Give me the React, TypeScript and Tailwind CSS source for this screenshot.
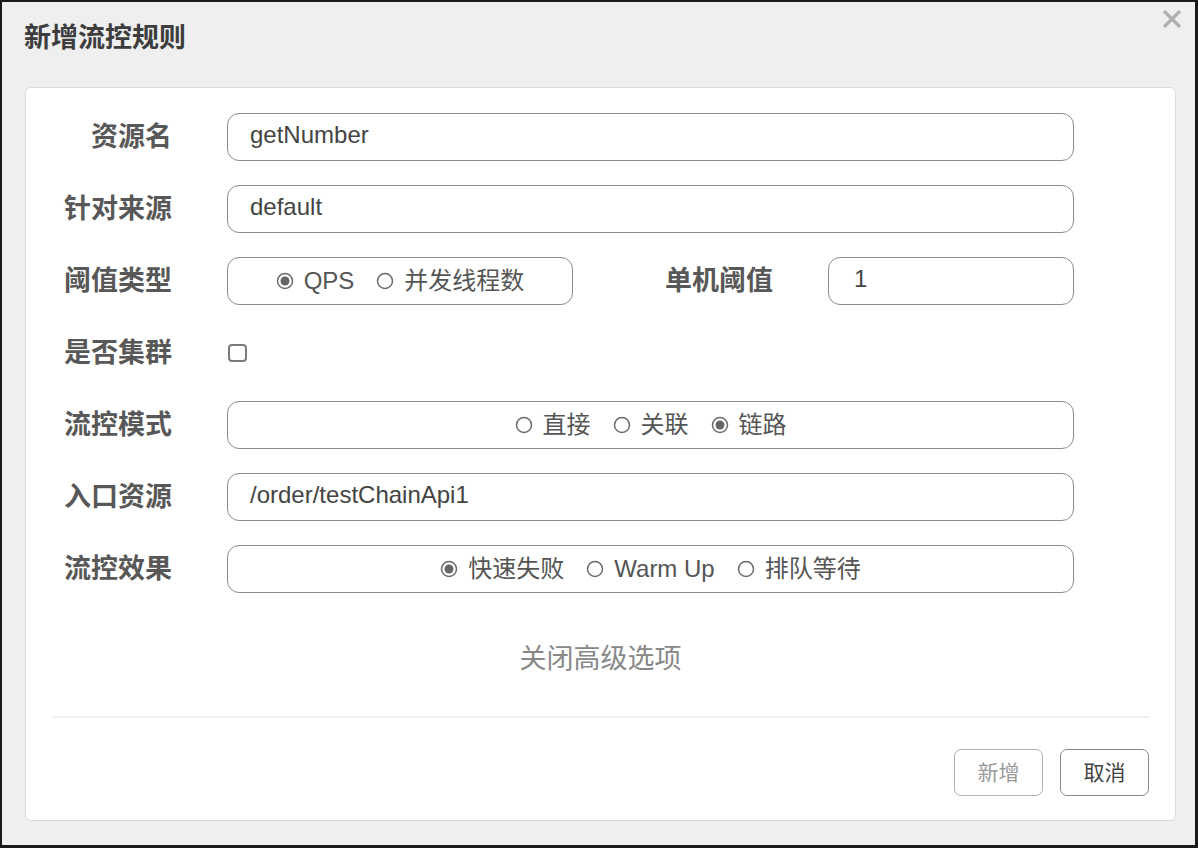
import React from "react";

const font = { fontFamily: "'Liberation Sans', 'Noto Sans CJK SC', sans-serif" };

function Radio({ checked, label }: { checked?: boolean; label: string }) {
  return (
    <span className="flex items-center gap-[10px]">
      <svg width="18" height="18" viewBox="0 0 18 18" className="shrink-0">
        <circle cx="9" cy="9" r="7.5" fill="#fff" stroke="#6b6b6b" strokeWidth="1.5" />
        {checked && <circle cx="9" cy="9" r="4.5" fill="#666" />}
      </svg>
      <span>{label}</span>
    </span>
  );
}

function Label({ children, w = "w-[146px]" }: { children: React.ReactNode; w?: string }) {
  return (
    <div className={`${w} shrink-0 text-right text-[27px] font-bold text-[#585858] leading-none`}>
      {children}
    </div>
  );
}

function TextBox({ value, w = "w-[847px]", pl = "pl-[22px]" }: { value: string; w?: string; pl?: string }) {
  return (
    <div
      className={`${w} ${pl} h-[48px] ml-[55px] flex items-center rounded-[12px] border border-[#8c8c8c] text-[24px] text-[#444] pb-[4px]`}
    >
      {value}
    </div>
  );
}

function RadioBox({ items, w = "w-[847px]" }: { items: { label: string; checked?: boolean }[]; w?: string }) {
  return (
    <div
      className={`${w} h-[48px] ml-[55px] flex items-center justify-center gap-[22px] rounded-[12px] border border-[#8c8c8c] text-[24px] text-[#555]`}
    >
      {items.map((it) => (
        <Radio key={it.label} label={it.label} checked={it.checked} />
      ))}
    </div>
  );
}

export default function App() {
  return (
    <div
      style={font}
      className="relative w-[1198px] h-[848px] bg-[#efefef] border-l-2 border-t-2 border-r-[3px] border-b-[3px] border-[#1a1a1a] overflow-hidden"
    >
      {/* header */}
      <div className="h-[72px] flex items-center pl-[22px] text-[27px] font-bold text-[#3d3d3d]">
        新增流控规则
      </div>
      <svg
        className="absolute top-[8px] right-[13px]"
        width="20"
        height="18"
        viewBox="0 0 20 18"
      >
        <path d="M2 1 L18 17 M18 1 L2 17" stroke="#b0b0b0" strokeWidth="3.2" />
      </svg>

      {/* card */}
      <div className="ml-[23px] mt-[13px] w-[1151px] h-[734px] bg-white border border-[#dcdcdc] rounded-[6px] flex flex-col">
        <div className="pt-[25px] flex flex-col gap-[24px]">
          <div className="flex items-center h-[48px]">
            <Label>资源名</Label>
            <TextBox value="getNumber" />
          </div>
          <div className="flex items-center h-[48px]">
            <Label>针对来源</Label>
            <TextBox value="default" />
          </div>
          <div className="flex items-center h-[48px]">
            <Label>阈值类型</Label>
            <RadioBox
              w="w-[346px]"
              items={[{ label: "QPS", checked: true }, { label: "并发线程数" }]}
            />
            <Label w="w-[200px]">单机阈值</Label>
            <TextBox value="1" w="w-[246px]" pl="pl-[25px]" />
          </div>
          <div className="flex items-center h-[48px]">
            <Label>是否集群</Label>
            <div className="ml-[56px] w-[19px] h-[18px] rounded-[4px] border-2 border-[#7a7a7a]" />
          </div>
          <div className="flex items-center h-[48px]">
            <Label>流控模式</Label>
            <RadioBox items={[{ label: "直接" }, { label: "关联" }, { label: "链路", checked: true }]} />
          </div>
          <div className="flex items-center h-[48px]">
            <Label>入口资源</Label>
            <TextBox value="/order/testChainApi1" />
          </div>
          <div className="flex items-center h-[48px]">
            <Label>流控效果</Label>
            <RadioBox
              items={[{ label: "快速失败", checked: true }, { label: "Warm Up" }, { label: "排队等待" }]}
            />
          </div>
        </div>

        <div className="mt-[48px] h-[36px] flex items-center justify-center text-[27px] text-[#888]">
          关闭高级选项
        </div>

        <div className="mt-[39px] mx-[26px] h-[2px] bg-[#efefef]" />

        <div className="mt-[31px] mx-[26px] flex justify-end gap-[17px]">
          <div className="w-[89px] h-[47px] rounded-[7px] border border-[#b0b0b0] flex items-center justify-center text-[21px] text-[#999]">
            新增
          </div>
          <div className="w-[89px] h-[47px] rounded-[7px] border border-[#8a8a8a] flex items-center justify-center text-[21px] text-[#444]">
            取消
          </div>
        </div>
      </div>
    </div>
  );
}
